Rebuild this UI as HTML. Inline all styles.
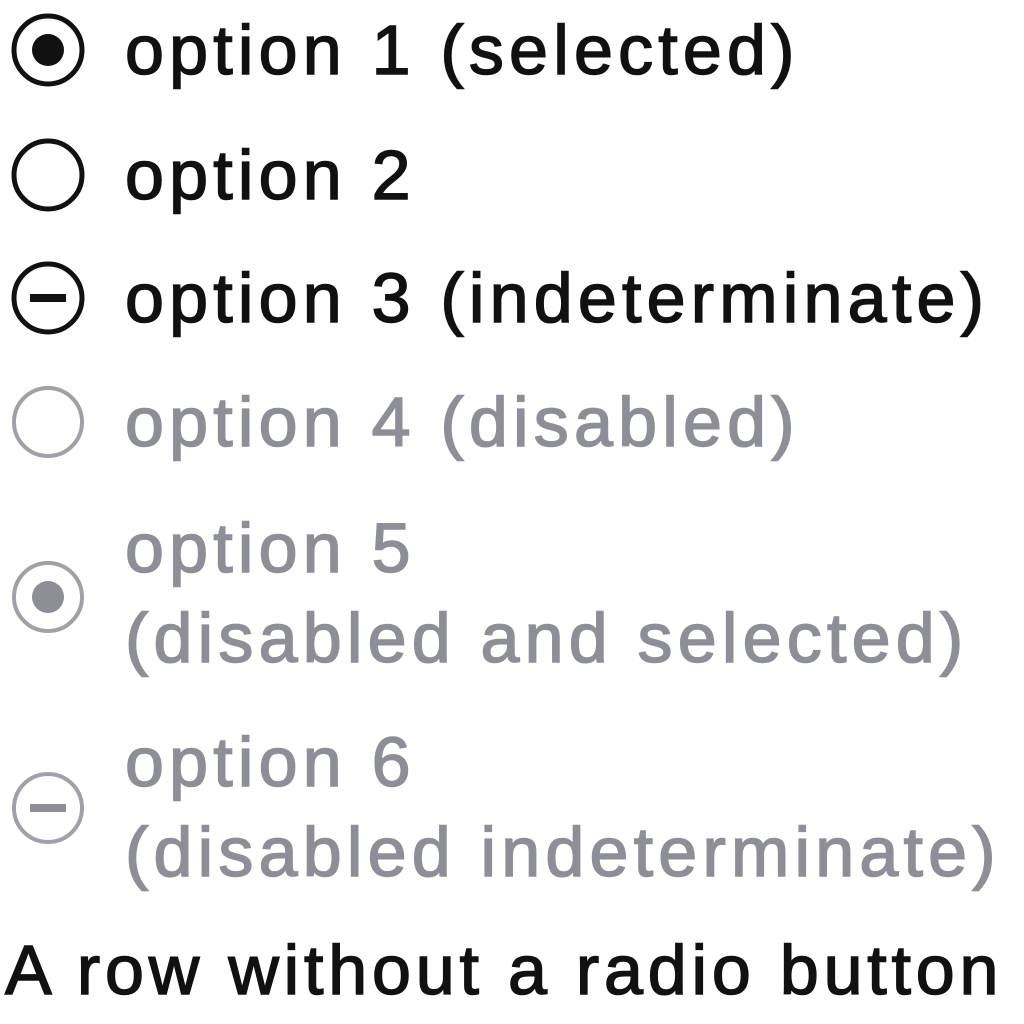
<!DOCTYPE html>
<html><head><style>
body{margin:0;width:1024px;height:1024px;background:#fff;position:relative;overflow:hidden;font-family:"Liberation Sans",sans-serif;}
.t{position:absolute;left:125px;font-size:70px;line-height:90px;color:#111;white-space:nowrap;letter-spacing:5.2px;-webkit-text-stroke:1.5px #111}
.d{color:#8e8e96;-webkit-text-stroke:1.5px #8e8e96}
svg{position:absolute;left:8px}
</style></head><body>
<svg style="top:10px" width="80" height="80"><circle cx="40" cy="40" r="34" fill="none" stroke="#111" stroke-width="5"/><circle cx="40" cy="40" r="16" fill="#111"/></svg>
<div class="t" style="top:5px">option 1 (selected)</div>
<svg style="top:135px" width="80" height="80"><circle cx="40" cy="40" r="34" fill="none" stroke="#111" stroke-width="5"/></svg>
<div class="t" style="top:130px">option 2</div>
<svg style="top:258px" width="80" height="80"><circle cx="40" cy="40" r="34" fill="none" stroke="#111" stroke-width="5"/><rect x="22" y="36" width="36" height="8" fill="#111"/></svg>
<div class="t" style="top:253px">option 3 (indeterminate)</div>
<svg style="top:382px" width="80" height="80"><circle cx="40" cy="40" r="34" fill="none" stroke="#a0a0a6" stroke-width="4"/></svg>
<div class="t d" style="top:377px">option 4 (disabled)</div>
<svg style="top:557px" width="80" height="80"><circle cx="40" cy="40" r="34" fill="none" stroke="#a0a0a6" stroke-width="4"/><circle cx="40" cy="40" r="16" fill="#8e8e96"/></svg>
<div class="t d" style="top:503px">option 5<br>(disabled and selected)</div>
<svg style="top:768px" width="80" height="80"><circle cx="40" cy="40" r="34" fill="none" stroke="#a0a0a6" stroke-width="4"/><rect x="22" y="36" width="36" height="8" fill="#8e8e96"/></svg>
<div class="t d" style="top:717px">option 6<br>(disabled indeterminate)</div>
<div class="t" style="top:925px;left:5px;letter-spacing:4.8px">A row without a radio button</div>
</body></html>
